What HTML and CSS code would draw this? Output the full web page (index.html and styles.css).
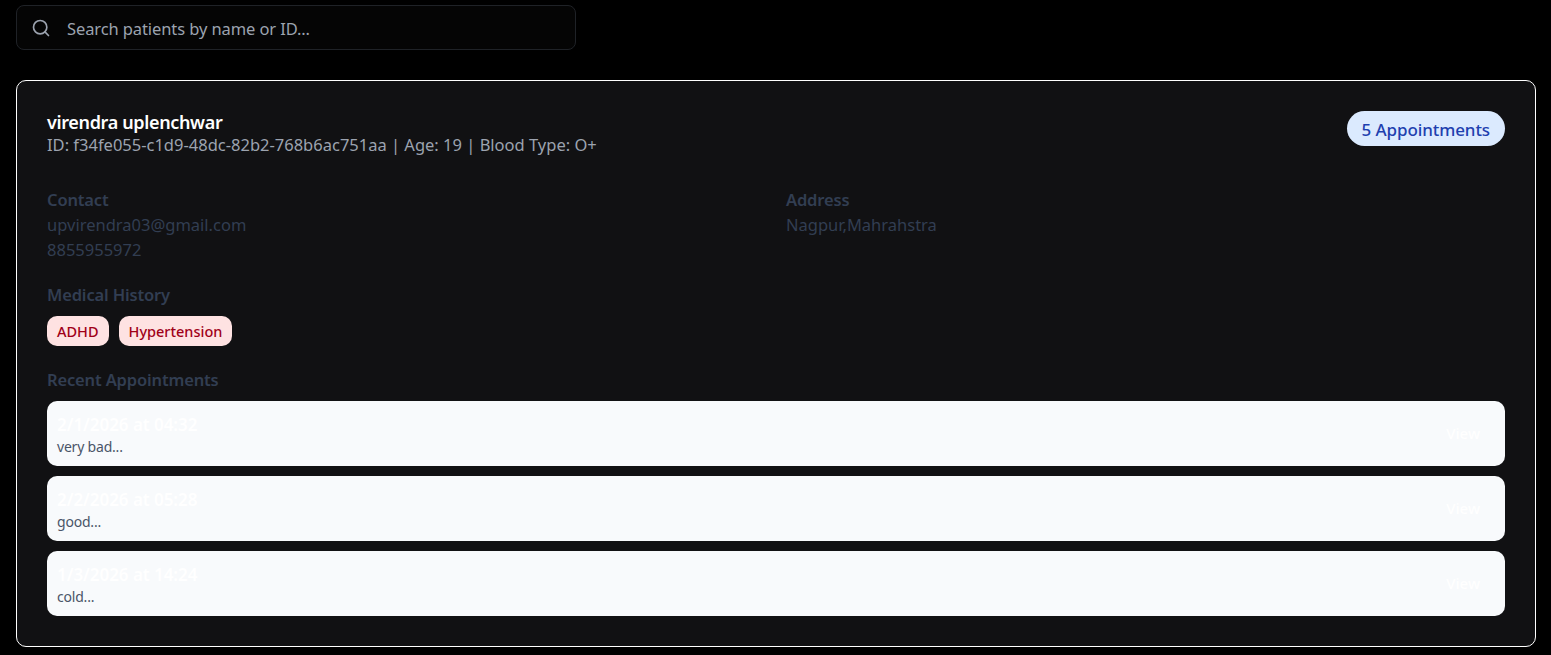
FILE: index.html
```html
<!DOCTYPE html>
<html lang="en">
<head>
    <meta charset="UTF-8">
    <meta name="viewport" content="width=device-width, initial-scale=1.0">
    <title>Patients</title>
    <link rel="stylesheet" href="styles.css">
</head>
<body>
    <div class="search">
        <svg class="search-icon" width="20" height="20" viewBox="0 0 24 24" fill="none" stroke="currentColor" stroke-width="2" stroke-linecap="round" stroke-linejoin="round">
            <circle cx="11" cy="11" r="8"></circle>
            <path d="m21 21-4.3-4.3"></path>
        </svg>
        <span class="search-text">Search patients by name or ID...</span>
    </div>
    <div class="card">
        <div class="card-head">
            <div>
                <div class="name">virendra uplenchwar</div>
                <div class="meta">ID: f34fe055-c1d9-48dc-82b2-768b6ac751aa | Age: 19 | Blood Type: O+</div>
            </div>
            <span class="count">5 Appointments</span>
        </div>
        <div class="info">
            <div>
                <div class="label">Contact</div>
                <div class="value">upvirendra03@gmail.com</div>
                <div class="value">8855955972</div>
            </div>
            <div>
                <div class="label">Address</div>
                <div class="value">Nagpur,Mahrahstra</div>
            </div>
        </div>
        <div class="label history-label">Medical History</div>
        <div class="tags">
            <span class="tag">ADHD</span>
            <span class="tag">Hypertension</span>
        </div>
        <div class="label recent-label">Recent Appointments</div>
        <div class="appts">
            <div class="appt">
                <div>
                    <div class="appt-date">2/1/2026 at 04:32</div>
                    <div class="appt-note">very bad...</div>
                </div>
                <span class="appt-view">View</span>
            </div>
            <div class="appt">
                <div>
                    <div class="appt-date">2/2/2026 at 05:28</div>
                    <div class="appt-note">good...</div>
                </div>
                <span class="appt-view">View</span>
            </div>
            <div class="appt">
                <div>
                    <div class="appt-date">1/3/2026 at 14:24</div>
                    <div class="appt-note">cold...</div>
                </div>
                <span class="appt-view">View</span>
            </div>
        </div>
    </div>
</body>
</html>
```

FILE: styles.css
```css
body {
    margin: 0;
    padding: 5px 15px 0 16px;
    background-color: #000;
    color: #fff;
    font-family: "Noto Sans", "Open Sans", Arial, sans-serif;
    overflow: hidden;
}
.search {
    width: 560px;
    height: 45px;
    box-sizing: border-box;
    display: flex;
    align-items: center;
    gap: 16px;
    padding-left: 14px;
    border: 1px solid #1f2227;
    border-radius: 8px;
    background-color: #050505;
    color: #9ca3af;
    font-size: 16.5px;
}
.search-icon {
    flex: none;
}
.search-text {
    letter-spacing: -0.1px;
    padding-top: 1px;
}
.card {
    margin-top: 30px;
    height: 567px;
    box-sizing: border-box;
    padding: 30px;
    border: 1px solid #fff;
    border-radius: 10px;
    background-color: #111113;
}
.card-head {
    display: flex;
    justify-content: space-between;
    align-items: flex-start;
}
.name {
    font-size: 18px;
    line-height: 22px;
    font-weight: 600;
    letter-spacing: -0.35px;
}
.meta {
    font-size: 16.5px;
    line-height: 23px;
    color: #9ca3af;
}
.count {
    padding: 0 15px;
    height: 35px;
    line-height: 37px;
    border-radius: 18px;
    background-color: #dbeafe;
    color: #1e40af;
    font-size: 17px;
    font-weight: 500;
    letter-spacing: -0.1px;
}
.info {
    display: grid;
    grid-template-columns: 1fr 1fr;
    column-gap: 20px;
    margin-top: 31px;
}
.label {
    font-size: 16.5px;
    line-height: 25px;
    font-weight: 600;
    color: #323e52;
    letter-spacing: -0.15px;
}
.value {
    font-size: 16.5px;
    line-height: 25px;
    color: #323e52;
}
.history-label {
    margin-top: 20px;
}
.tags {
    display: flex;
    gap: 10px;
    margin-top: 9px;
}
.tag {
    padding: 0 10px;
    height: 30px;
    line-height: 31px;
    border-radius: 10px;
    background-color: #fee2e2;
    color: #a00018;
    font-size: 14.5px;
    font-weight: 500;
}
.recent-label {
    margin-top: 21px;
}
.appts {
    display: flex;
    flex-direction: column;
    gap: 10px;
    margin-top: 9px;
}
.appt {
    height: 65px;
    box-sizing: border-box;
    display: flex;
    justify-content: space-between;
    align-items: center;
    padding: 2px 25px 0 10px;
    border-radius: 10px;
    background-color: #f8fafc;
}
.appt-date {
    font-size: 17px;
    line-height: 24px;
    font-weight: 600;
    letter-spacing: -0.05px;
}
.appt-note {
    font-size: 14px;
    line-height: 20px;
    color: #4a5568;
    letter-spacing: -0.2px;
}
.appt-view {
    font-size: 15px;
    font-weight: 500;
    margin-bottom: 4px;
}
```
